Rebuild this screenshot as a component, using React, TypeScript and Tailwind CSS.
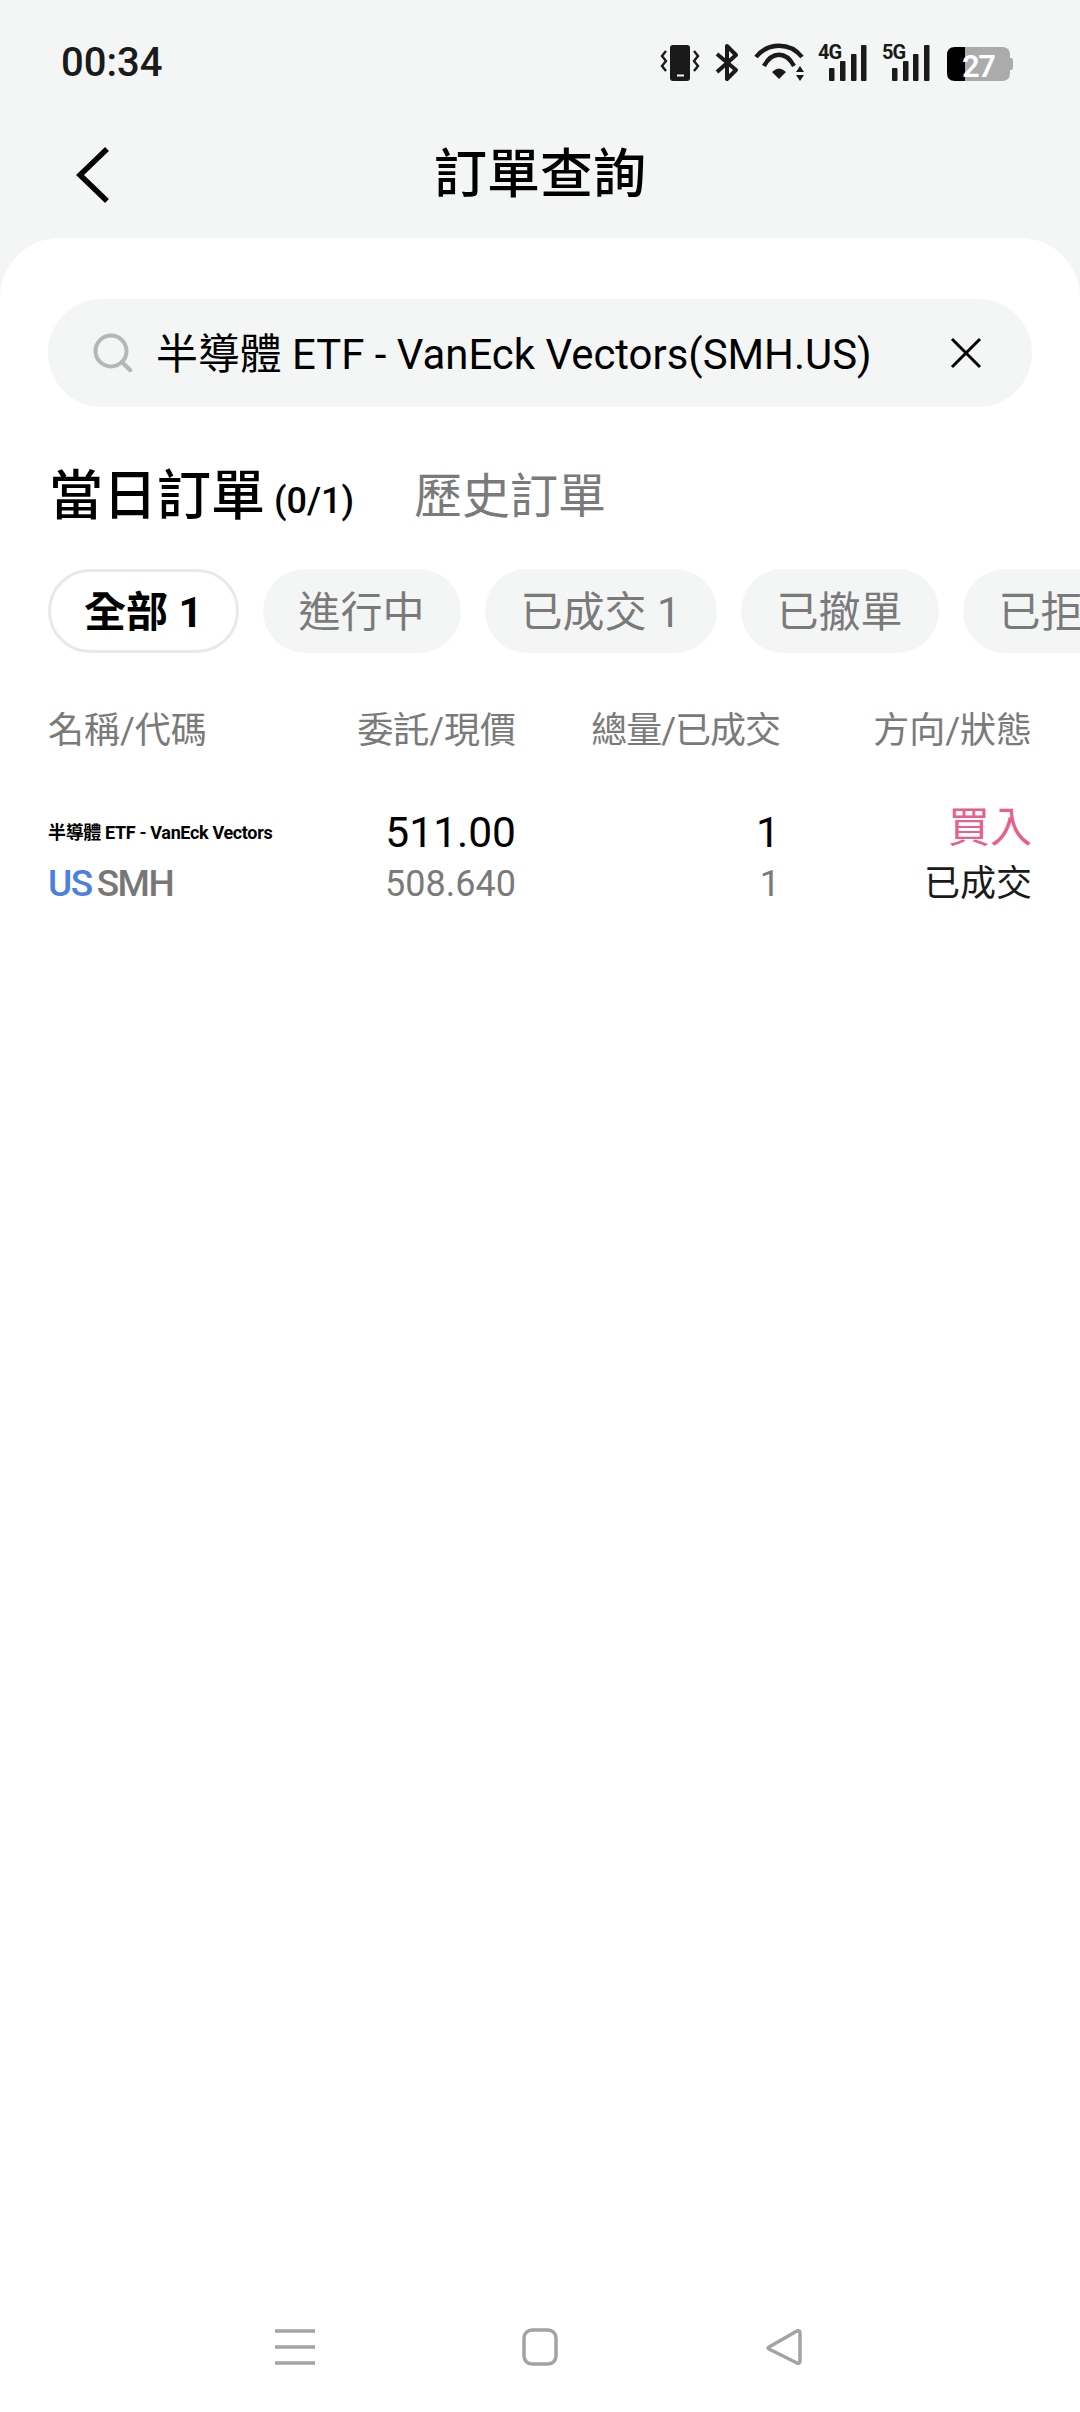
import React from "react";

function StatusIcons() {
  return (
    <svg width="360" height="44" viewBox="0 0 360 44" className="block" fill="none">
      <rect x="10" y="4" width="20" height="36" rx="3" fill="#1a1a1a" />
      <rect x="17" y="33.5" width="7" height="2" fill="#f4f6f6" />
      <path d="M6 10 L2 15 L6 20 L2 25 L6 30" stroke="#1a1a1a" strokeWidth="2.4" />
      <path d="M34 10 L38 15 L34 20 L38 25 L34 30" stroke="#1a1a1a" strokeWidth="2.4" />
      <path d="M57 13 L76 29 L67 38 V5 L76 14 L57 31" stroke="#1a1a1a" strokeWidth="4" strokeLinejoin="round" />
      <path d="M96 16 C108 1 130 1 142 16" stroke="#1a1a1a" strokeWidth="4.4" />
      <path d="M104 25 C112 10 126 10 134 25" stroke="#1a1a1a" strokeWidth="4.4" />
      <path d="M112 31 Q119 24 126 31 L119 38 Z" fill="#1a1a1a" />
      <path d="M136 31 L140 25 L144 31 Z M136 34 H144 L140 40 Z" fill="#1a1a1a" />
      <text x="158" y="18" fontFamily="Roboto" fontWeight="700" fontSize="20" letterSpacing="-1" fill="#1a1a1a">4G</text>
      <rect x="169" y="27" width="5.5" height="13" rx="1" fill="#1a1a1a" />
      <rect x="180" y="20" width="5.5" height="20" rx="1" fill="#1a1a1a" />
      <rect x="191" y="13" width="5.5" height="27" rx="1" fill="#1a1a1a" />
      <rect x="201" y="4" width="5.5" height="36" rx="1" fill="#1a1a1a" />
      <text x="222" y="18" fontFamily="Roboto" fontWeight="700" fontSize="20" letterSpacing="-1" fill="#1a1a1a">5G</text>
      <rect x="232" y="27" width="5.5" height="13" rx="1" fill="#1a1a1a" />
      <rect x="243" y="20" width="5.5" height="20" rx="1" fill="#1a1a1a" />
      <rect x="253" y="13" width="5.5" height="27" rx="1" fill="#1a1a1a" />
      <rect x="264" y="4" width="5.5" height="36" rx="1" fill="#1a1a1a" />
      <path d="M305 6 H342 Q350 6 350 14 V32 Q350 40 342 40 H305 Z" fill="#ababab" />
      <path d="M305 6 H295 Q287 6 287 14 V32 Q287 40 295 40 H305 Z" fill="#000" />
      <path d="M350 17 H351 Q353 17 353 20 V26 Q353 29 351 29 H350 Z" fill="#ababab" />
      <text x="302" y="36" fontFamily="Roboto" fontWeight="600" fontSize="31" letterSpacing="-1.5" fill="#fff">27</text>
    </svg>
  );
}

const Chip = ({ children }: { children: React.ReactNode }) => (
  <div className="h-[84px] px-[36px] pt-[2px] shrink-0 rounded-full bg-[#f4f6f6] flex items-center text-[42px] text-[#7a7a7a] whitespace-nowrap">
    {children}
  </div>
);

const cols = "grid grid-cols-[240px_228px_264px_252px] items-center";

export default function App() {
  return (
    <div className="w-[1080px] h-[2412px] flex flex-col overflow-hidden bg-[#f4f6f6] font-['Roboto','Noto_Sans_CJK_TC',sans-serif] text-black">
      <div className="h-[112px] pt-[13px] pl-[61px] pr-[60px] flex items-center justify-between shrink-0">
        <span className="text-[40px] leading-none font-medium text-[#1a1a1a]">00:34</span>
        <StatusIcons />
      </div>

      <div className="h-[126px] shrink-0 pl-[76px] flex items-center relative">
        <svg width="34" height="56" viewBox="0 0 34 56" fill="none">
          <path d="M31 2 L4 28 L31 54" stroke="#000" strokeWidth="5.5" />
        </svg>
        <div className="absolute inset-0 pt-[2px] flex items-center justify-center text-[53px] font-medium">訂單查詢</div>
      </div>

      <div className="flex-1 bg-white rounded-t-[60px] pt-[61px] flex flex-col overflow-hidden">
        <div className="mx-[48px] h-[108px] shrink-0 rounded-full bg-[#f4f6f6] pl-[45px] pr-[50px] flex items-center">
          <svg width="40" height="40" viewBox="0 0 40 40" fill="none" className="shrink-0">
            <circle cx="18" cy="18" r="15.5" stroke="#b5b7b7" strokeWidth="4" />
            <path d="M29 29 L37 37" stroke="#b5b7b7" strokeWidth="4.5" strokeLinecap="round" />
          </svg>
          <span className="ml-[23px] pt-[3px] text-[41.9px] leading-none whitespace-nowrap">半導體 ETF - VanEck Vectors(SMH.US)</span>
          <svg width="32" height="32" viewBox="0 0 32 32" fill="none" className="ml-auto shrink-0">
            <path d="M2 2 L30 30 M30 2 L2 30" stroke="#000" strokeWidth="3" />
          </svg>
        </div>

        <div className="mt-[54px] h-[72px] pl-[49px] flex items-center shrink-0">
          <span className="text-[54px] font-medium leading-none">當日訂單</span>
          <span className="ml-[9px] mt-[8px] text-[36px] font-medium leading-none">(0/1)</span>
          <span className="ml-[60px] text-[48px] leading-none text-[#7a7a7a]">歷史訂單</span>
        </div>

        <div className="mt-[36px] pl-[48px] flex gap-[24px] shrink-0">
          <div className="h-[84px] px-[33px] pt-[2px] shrink-0 rounded-full bg-white border-[3px] border-[#e9e9e9] flex items-center text-[42px] font-bold whitespace-nowrap">
            全部 1
          </div>
          <Chip>進行中</Chip>
          <Chip>已成交 1</Chip>
          <Chip>已撤單</Chip>
          <Chip>已拒絕</Chip>
        </div>

        <div className={`mt-[51px] mx-[48px] h-[50px] shrink-0 text-[36px] text-[#7a7a7a] ${cols}`}>
          <span>名稱/代碼</span>
          <span className="text-right">委託/現價</span>
          <span className="text-right tracking-[-1px]">總量/已成交</span>
          <span className="text-right">方向/狀態</span>
        </div>

        <div className={`mt-[47px] mx-[48px] h-[55px] shrink-0 ${cols}`}>
          <span className="text-[18px] font-bold tracking-[-0.35px] whitespace-nowrap">半導體 ETF - VanEck Vectors</span>
          <span className="text-right text-[42.5px]">511.00</span>
          <span className="text-right text-[42.5px]">1</span>
          <span className="text-right text-[42px] text-[#e8608a] -mt-[10px]">買入</span>
        </div>
        <div className={`mx-[48px] h-[55px] shrink-0 ${cols}`}>
          <span className="text-[37px] font-medium tracking-[-1.5px]">
            <span className="text-[#4a80e4]">US</span>
            <span className="ml-[5px] text-[#777777]">SMH</span>
          </span>
          <span className="text-right text-[36px] text-[#7a7a7a]">508.640</span>
          <span className="text-right text-[36px] text-[#7a7a7a]">1</span>
          <span className="text-right text-[36px] text-[#1a1a1a]">已成交</span>
        </div>

        <div className="mt-auto pb-[46px] flex justify-center items-center gap-[206px] pr-[3px]">
          <svg width="40" height="38" viewBox="0 0 40 38" fill="none">
            <path d="M0 3 H40 M0 19 H40 M0 35 H40" stroke="#a3a3a3" strokeWidth="3.5" />
          </svg>
          <svg width="38" height="38" viewBox="0 0 38 38" fill="none">
            <rect x="3" y="2" width="32" height="34" rx="8" stroke="#a3a3a3" strokeWidth="3.5" />
          </svg>
          <svg width="38" height="38" viewBox="0 0 38 38" fill="none">
            <path d="M4 19 L32 3 Q35 2 35 5 V33 Q35 36 32 35 L4 21 Q2 20 4 19 Z" stroke="#a3a3a3" strokeWidth="3.5" strokeLinejoin="round" />
          </svg>
        </div>
      </div>
    </div>
  );
}
